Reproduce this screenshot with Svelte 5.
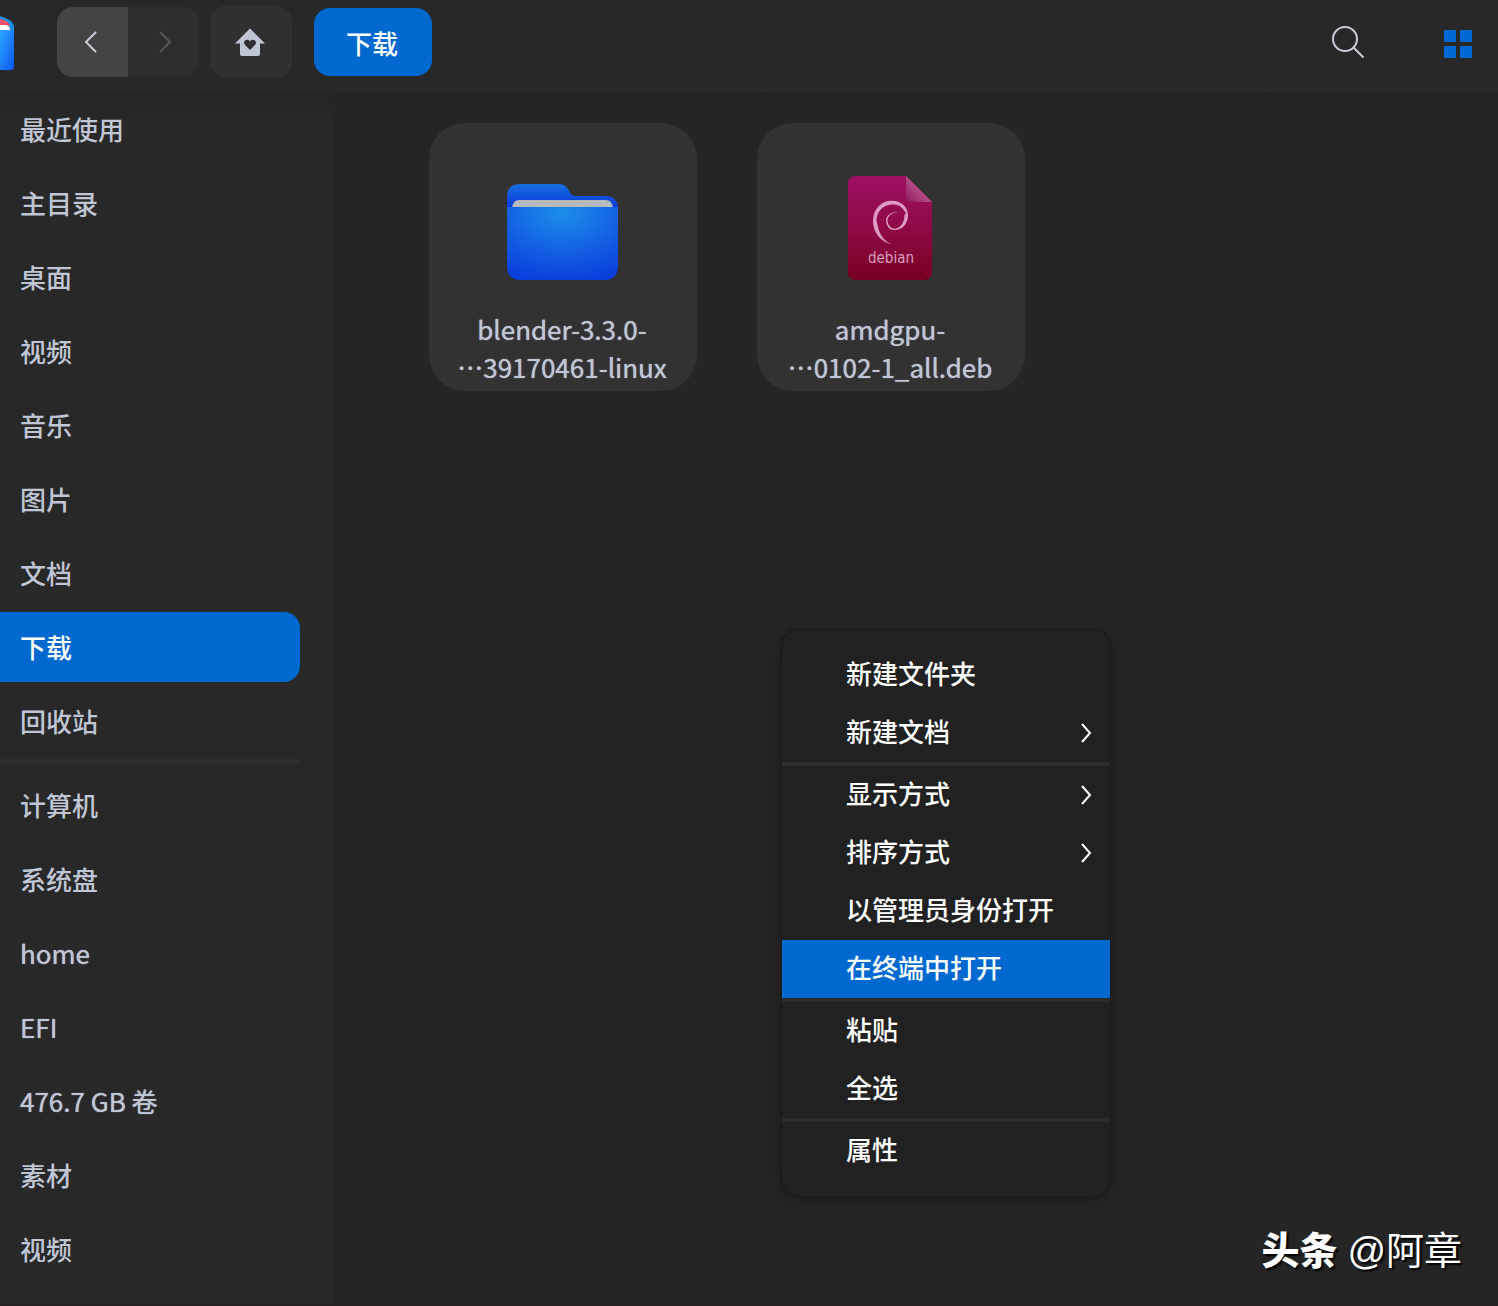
<script lang="ts">
  type MenuItem = { label: string; submenu?: boolean }

  const places = ['最近使用', '主目录', '桌面', '视频', '音乐', '图片', '文档', '下载', '回收站']
  const devices = ['计算机', '系统盘', 'home', 'EFI', '476.7 GB 卷', '素材', '视频']

  const files = [
    { kind: 'folder', lines: ['blender-3.3.0-', '⋯39170461-linux'] },
    { kind: 'deb', lines: ['amdgpu-', '⋯0102-1_all.deb'] },
  ]

  const menu: MenuItem[][] = [
    [{ label: '新建文件夹' }, { label: '新建文档', submenu: true }],
    [
      { label: '显示方式', submenu: true },
      { label: '排序方式', submenu: true },
      { label: '以管理员身份打开' },
      { label: '在终端中打开' },
    ],
    [{ label: '粘贴' }, { label: '全选' }],
    [{ label: '属性' }],
  ]

  let current = $state(7)
  let hovered = $state('在终端中打开')

  // Latin letters look too wide at medium weight
  const isLatin = (name: string) => /^[\x20-\x7e]/.test(name)
</script>

<div class="window" lang="zh-CN">
  <header>
    <svg class="logo" width="14" height="56" viewBox="0 0 14 56" aria-hidden="true">
      <defs>
        <linearGradient id="logo-body" x1="0" y1="0" x2="1" y2="1">
          <stop offset="0" stop-color="#2fa8ff" />
          <stop offset="1" stop-color="#0a55f5" />
        </linearGradient>
      </defs>
      <path d="M0 2 Q14 6 14 13 V30 H0Z" fill="#1a8fe0" />
      <path d="M0 5 Q8 6 10 12 H0Z" fill="#f0506e" />
      <path d="M0 11 H6 Q10 12 10 16 H0Z" fill="#fff" />
      <path d="M0 16 H14 V53 Q14 56 11 56 H0Z" fill="url(#logo-body)" />
    </svg>

    <div class="history">
      <button class="back" aria-label="后退">
        <svg width="14" height="24" viewBox="0 0 14 24"><path d="M12 2 2 12 12 22" /></svg>
      </button>
      <button class="forward" aria-label="前进" disabled>
        <svg width="14" height="24" viewBox="0 0 14 24"><path d="M2 2 12 12 2 22" /></svg>
      </button>
    </div>

    <button class="home" aria-label="主目录">
      <svg width="32" height="28" viewBox="0 0 32 28">
        <path
          fill="#c0c6d4"
          fill-rule="evenodd"
          d="M15 0.500 30 15.500H25V26Q25 28 23 28H7Q5 28 5 26V15.500H0ZM15 22 20.200 16.800Q21.800 14.400 20 12.600C18.400 11.100 16 11.500 15 13.400C14 11.500 11.600 11.100 10 12.600Q8.200 14.400 9.800 16.800Z"
        />
      </svg>
    </button>

    <button class="crumb">下载</button>

    <div class="tools">
      <button aria-label="搜索">
        <svg width="34" height="34" viewBox="0 0 34 34" fill="none" stroke="#c9cdd8" stroke-width="2">
          <circle cx="14" cy="14" r="12" />
          <path d="M22.500 22.500 32 32" stroke-linecap="round" />
        </svg>
      </button>
      <button aria-label="图标视图">
        <svg width="28" height="29" viewBox="0 0 28 29" fill="#0069d2">
          <rect width="12" height="12" rx="1" />
          <rect x="16" width="12" height="12" rx="1" />
          <rect y="16" width="12" height="12" rx="1" />
          <rect x="16" y="16" width="12" height="12" rx="1" />
        </svg>
      </button>
    </div>
  </header>

  <div class="body">
    <nav>
      <ul>
        {#each places as place, i}
          <li>
            <button class:active={i === current} onclick={() => (current = i)}>{place}</button>
          </li>
        {/each}
      </ul>
      <hr />
      <ul>
        {#each devices as device, i}
          <li>
            <button
              class:latin={isLatin(device)}
              class:active={i + places.length === current}
              onclick={() => (current = i + places.length)}>{device}</button
            >
          </li>
        {/each}
      </ul>
    </nav>

    <main>
      <div class="files">
        {#each files as file}
          <figure>
            {#if file.kind === 'folder'}
              <svg class="icon" width="128" height="128" viewBox="0 0 128 128" aria-hidden="true">
                <defs>
                  <linearGradient id="folder-back" x1="0" y1="0" x2="0" y2="1">
                    <stop offset="0" stop-color="#176fe0" />
                    <stop offset="0.600" stop-color="#0a36dc" />
                  </linearGradient>
                  <radialGradient id="folder-front" cx="0.5" cy="0.08" r="0.95">
                    <stop offset="0" stop-color="#1b8fe8" />
                    <stop offset="0.500" stop-color="#1464e4" />
                    <stop offset="1" stop-color="#0a3fdc" />
                  </radialGradient>
                </defs>
                <path
                  fill="url(#folder-back)"
                  d="M8 60V33Q8 20 21 20H60Q67 20 70 27Q72 32 77 32H106Q119 32 119 45V60Z"
                />
                <path fill="#b5babd" d="M13 44Q14 36 20 36H107Q113 36 114 44Z" />
                <path
                  fill="url(#folder-front)"
                  d="M8 43H119V102Q119 116 105 116H22Q8 116 8 102Z"
                />
              </svg>
            {:else}
              <svg class="icon" width="128" height="128" viewBox="0 0 128 128" aria-hidden="true">
                <defs>
                  <linearGradient id="deb-page" x1="0" y1="0" x2="0" y2="1">
                    <stop offset="0" stop-color="#9c1063" />
                    <stop offset="0.500" stop-color="#8f0a45" />
                    <stop offset="1" stop-color="#780022" />
                  </linearGradient>
                  <linearGradient id="deb-fold" x1="0.6" y1="0.4" x2="0" y2="1">
                    <stop offset="0" stop-color="#b5588f" />
                    <stop offset="1" stop-color="#94195f" />
                  </linearGradient>
                </defs>
                <path
                  fill="url(#deb-page)"
                  d="M29 12H79L105 38V108Q105 116 97 116H29Q21 116 21 108V20Q21 12 29 12Z"
                />
                <path fill="url(#deb-fold)" d="M79 12 105 38H86Q79 38 79 31Z" />
                <path
                  fill="#dc9cc3"
                  d="M66 81C54 78 46 69 46 57C46 44 55 36.700 65 36.700C74 36.700 81 43 81 51C81 60 75 66 67.500 66C62 66 59 61 59 56C60 51 65 47.500 71 48.500C65 48.500 61 52 60.500 56C60.500 61 64 64.700 68 64.700C74 64 77.500 58 77.500 51L79 49L76 45C73 41 69 40.500 64 40.500C55 41.500 50 48 49.500 56L51 63C53 72 58 78 66 81Z"
                />
                <text x="64" y="99" text-anchor="middle">debian</text>
              </svg>
            {/if}
            <figcaption>
              {#each file.lines as line}
                <span>{line}</span>
              {/each}
            </figcaption>
          </figure>
        {/each}
      </div>

      <div class="menu" role="menu">
        {#each menu as group}
          <div class="group" role="group">
            {#each group as item}
              <button
                role="menuitem"
                class:hovered={item.label === hovered}
                onmouseenter={() => (hovered = item.label)}
              >
                <span>{item.label}</span>
                {#if item.submenu}
                  <svg width="12" height="20" viewBox="0 0 12 20" aria-hidden="true">
                    <path d="M2 1 10 10 2 19" />
                  </svg>
                {/if}
              </button>
            {/each}
          </div>
        {/each}
      </div>

      <p class="credit"><strong>头条</strong> <span>@阿章</span></p>
    </main>
  </div>
</div>

<style>
  :global(body) {
    margin: 0;
    background: #252525;
  }

  .window {
    --accent: #0069d0;
    --text: #c0c6d4;
    display: flex;
    flex-direction: column;
    box-sizing: border-box;
    min-height: 100vh;
    border-bottom: 2px solid #241f21;
    font-family: 'Noto Sans CJK SC', sans-serif;
    font-size: 26px;
    font-weight: 500;
    color: var(--text);
  }

  button {
    display: flex;
    align-items: center;
    justify-content: center;
    box-sizing: border-box;
    padding: 0;
    border: 0;
    background: none;
    font: inherit;
    color: inherit;
  }

  header {
    display: flex;
    align-items: center;
    box-sizing: border-box;
    height: 92px;
    padding: 0 26px 8px 0;
    background: #282828;
  }

  .logo {
    margin-right: 43px;
  }

  .history {
    display: flex;
    margin-right: 11px;
    border-radius: 16px;
    overflow: hidden;
  }

  .history button {
    width: 71px;
    height: 70px;
    background: #2e2e2e;
  }

  .history .back {
    padding-right: 4px;
    background: #444;
  }

  .history .forward {
    padding-left: 2px;
  }

  .history path {
    fill: none;
    stroke: #c9cdd8;
    stroke-width: 2;
  }

  .history .forward path {
    stroke: #565656;
  }

  .home {
    width: 82px;
    height: 72px;
    margin-right: 22px;
    border-radius: 16px;
    background: #303030;
  }

  .crumb {
    width: 118px;
    height: 68px;
    padding-right: 2px;
    border-radius: 16px;
    background: var(--accent);
    color: #fff;
  }

  .tools {
    display: flex;
    align-items: flex-end;
    gap: 79px;
    margin-left: auto;
  }

  .body {
    display: flex;
    flex: 1;
  }

  nav {
    flex: 0 0 334px;
    box-sizing: border-box;
    padding: 2px 34px 0 0;
    background: linear-gradient(#242424, #282828 28px);
  }

  ul {
    display: flex;
    flex-direction: column;
    gap: 4px;
    margin: 0;
    padding: 0;
    list-style: none;
  }

  nav button {
    justify-content: flex-start;
    width: 100%;
    height: 70px;
    padding: 0 0 2px 20px;
    border-radius: 0 16px 16px 0;
  }

  nav button.active {
    background: var(--accent);
    color: #fff;
  }

  nav button.latin,
  figcaption {
    font-weight: 400;
    text-shadow: 0 0 1px var(--text);
  }

  hr {
    height: 4px;
    margin: 3px 0 7px;
    border: 0;
    background: #2e2e2e;
  }

  main {
    position: relative;
    flex: 1;
    padding: 31px 95px;
    background: linear-gradient(#222, #252525 24px);
  }

  .files {
    display: flex;
    flex-wrap: wrap;
    gap: 60px;
  }

  figure {
    display: flex;
    flex-direction: column;
    align-items: center;
    box-sizing: border-box;
    width: 268px;
    height: 268px;
    margin: 0;
    padding-top: 41px;
    border-radius: 36px;
    background: #323232;
  }

  .icon text {
    font: 400 15px 'DejaVu Sans Condensed', 'DejaVu Sans', sans-serif;
    fill: #dc9cc3;
  }

  figcaption {
    display: flex;
    flex-direction: column;
    align-items: center;
    margin-top: 18px;
    padding-right: 2px;
    line-height: 38px;
  }

  .menu {
    position: absolute;
    top: 538px;
    left: 448px;
    width: 328px;
    padding: 16px 0;
    border-radius: 16px;
    background: #212121;
    box-shadow:
      0 0 0 1px #1a1a1a,
      0 4px 20px rgb(0 0 0 / 30%);
    color: #fff;
  }

  .group + .group {
    border-top: 4px solid #2c2c2c;
  }

  .menu button {
    justify-content: space-between;
    width: 100%;
    height: 58px;
    padding: 0 18px 0 64px;
  }

  .menu button.hovered {
    background: var(--accent);
  }

  .menu span {
    padding-bottom: 6px;
  }

  .menu path {
    fill: none;
    stroke: #fff;
    stroke-width: 2;
  }

  .credit {
    position: absolute;
    right: 36px;
    bottom: 25px;
    display: flex;
    align-items: baseline;
    gap: 10px;
    margin: 0;
    font-size: 38px;
    line-height: 56px;
    color: #fff;
    text-shadow: 2px 2px 2px #000;
  }

  .credit strong {
    font-weight: 900;
  }

  .credit span {
    font-family: 'Liberation Sans', 'Noto Sans CJK SC', sans-serif;
    font-weight: 400;
  }
</style>
